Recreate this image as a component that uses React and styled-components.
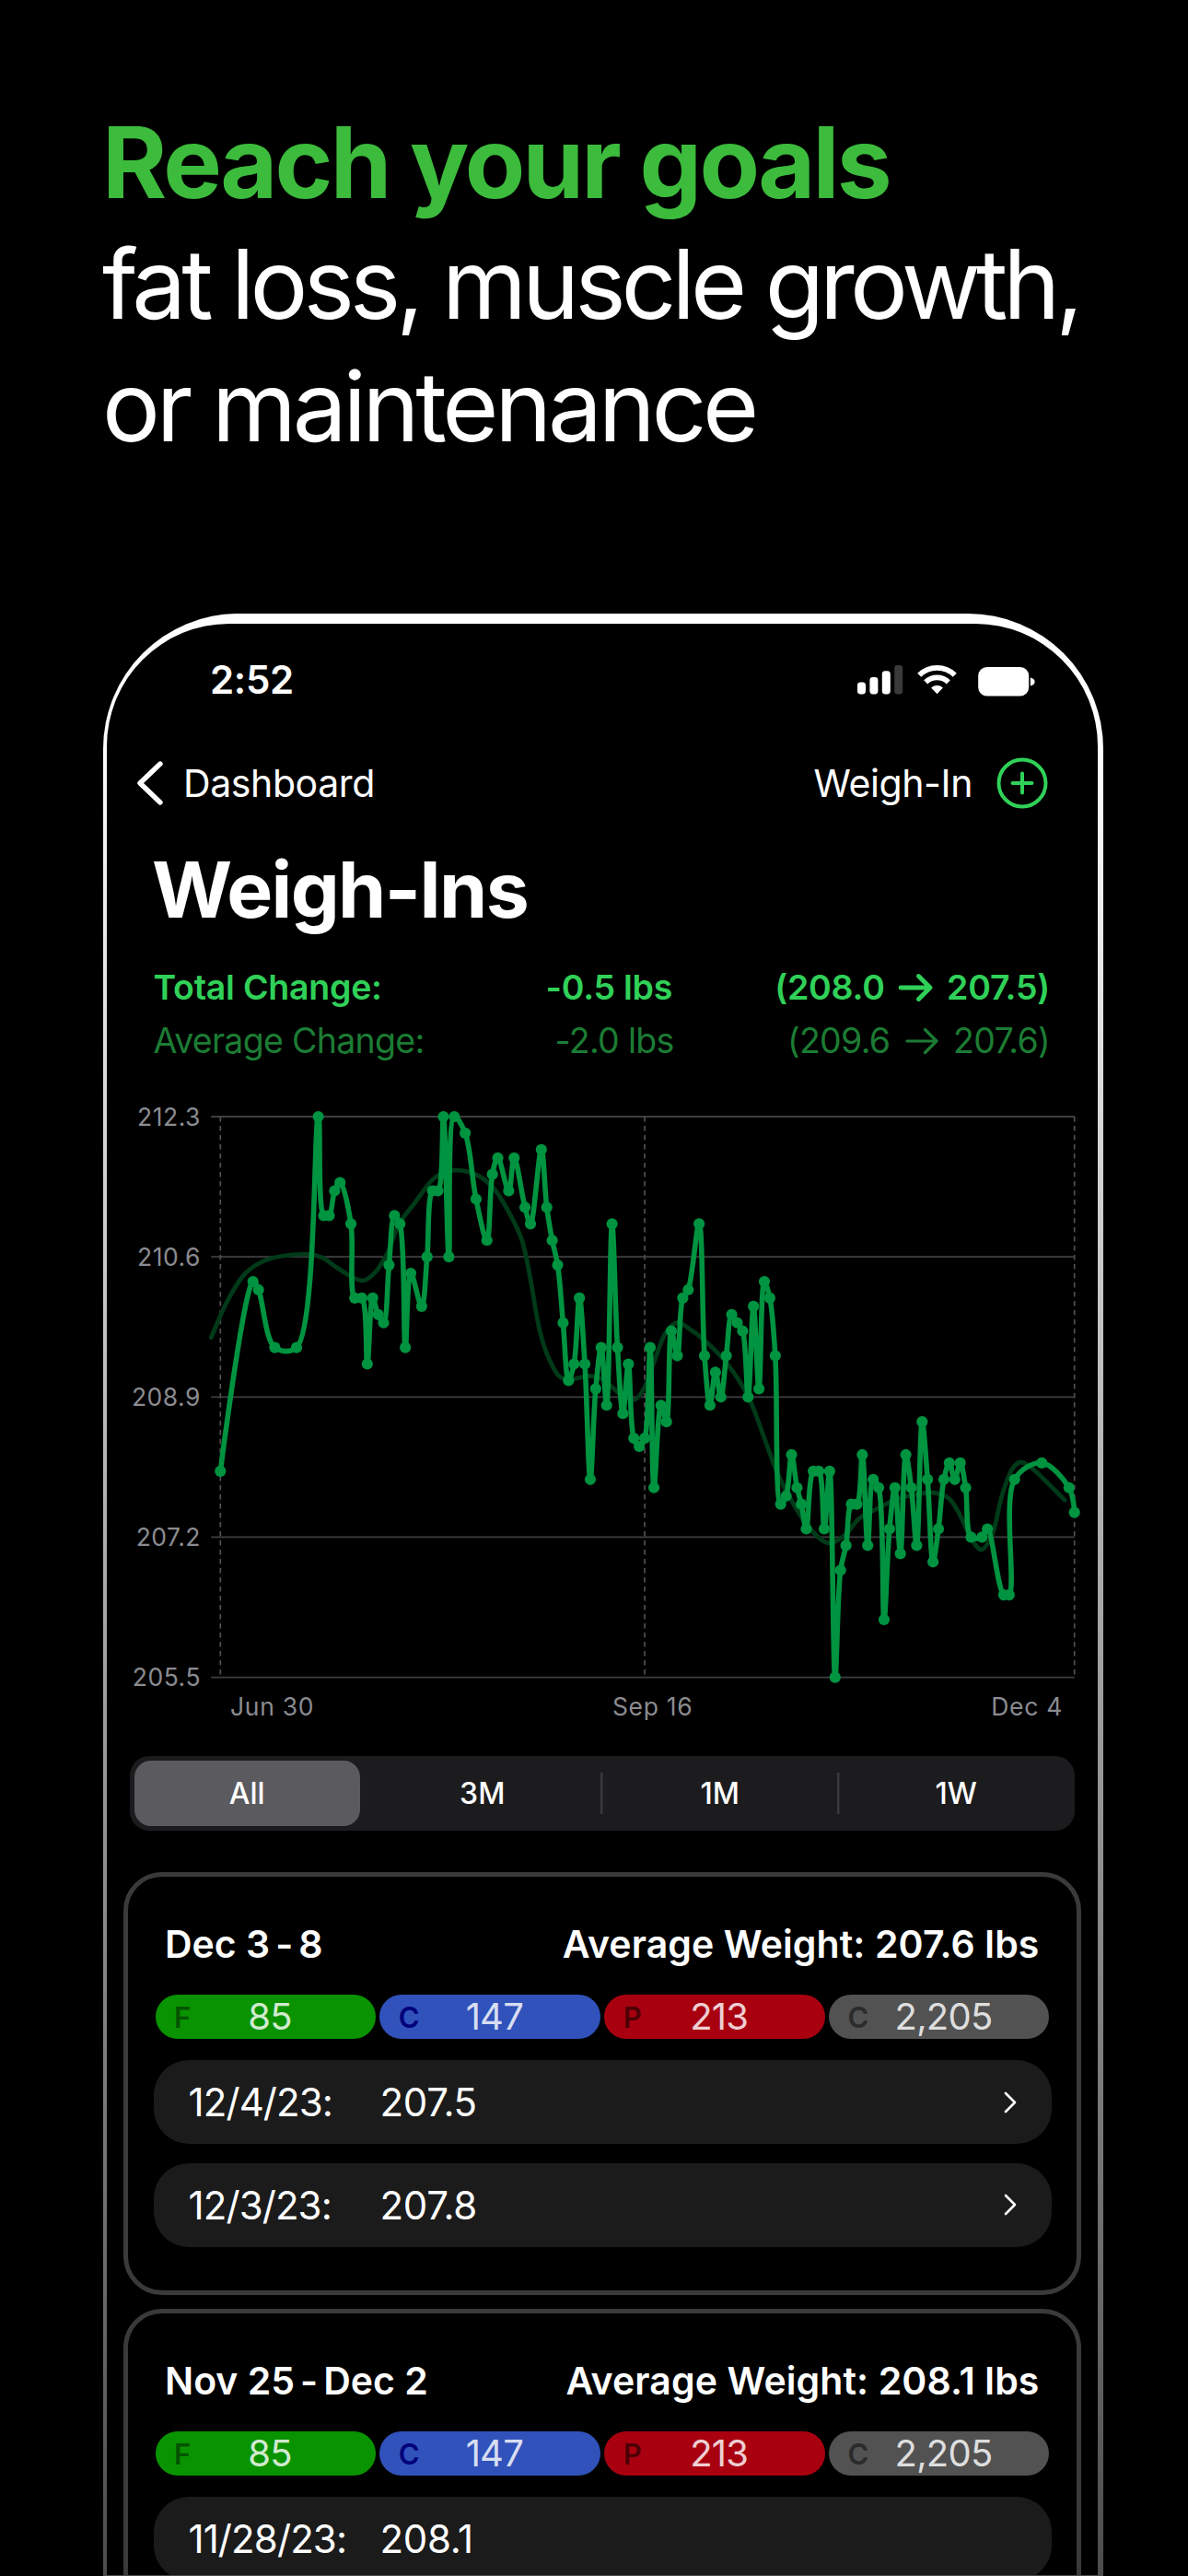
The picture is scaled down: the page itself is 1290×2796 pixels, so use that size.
import React from 'react';
import styled, { createGlobalStyle } from 'styled-components';

const GlobalStyle = createGlobalStyle`
  * {
    box-sizing: border-box;
  }

  body {
    margin: 0;
    background: #000;
    color: #fff;
    font-family: Inter, Roboto, "Liberation Sans", sans-serif;
  }
`;

const weights = [
  [0, 208.0], [6, 210.3], [7, 210.2], [10, 209.5], [14, 209.5], [18, 212.3],
  [19, 211.1], [20, 211.1], [21, 211.4], [22, 211.5], [24, 211.0], [24.7, 210.1],
  [26, 210.1], [27, 209.3], [28, 210.1], [29, 209.9], [30, 209.8], [31, 210.5],
  [32, 211.1], [33, 211.0], [34, 209.5], [35, 210.4], [37, 210.0], [38, 210.6],
  [39, 211.4], [40, 211.4], [41, 212.3], [42, 210.6], [43, 212.3], [45, 212.1],
  [47, 211.3], [49, 210.8], [50, 211.6], [51, 211.8], [53, 211.4], [54, 211.8],
  [56, 211.2], [57, 211.0], [59, 211.9], [60, 211.2], [61, 210.8], [62, 210.5],
  [63, 209.8], [64, 209.1], [65, 209.3], [66, 210.1], [67, 209.3], [68, 207.9],
  [69, 209.0], [70, 209.5], [71, 208.8], [72, 211.0], [73, 209.5], [74, 208.7],
  [75, 209.3], [76, 208.4], [77, 208.3], [78, 208.4], [79, 209.5], [79.7, 207.8],
  [81, 208.8], [82, 208.6], [82.9, 209.7], [84, 209.4], [85, 210.1], [86, 210.2],
  [88, 211.0], [89, 209.4], [90, 208.8], [91, 209.2], [92, 208.9], [93, 209.4],
  [94, 209.9], [95, 209.8], [96, 209.7], [97, 208.9], [98, 210.0], [99, 209.0],
  [100, 210.3], [101, 210.1], [102, 209.4], [103, 207.6], [104, 207.7], [105, 208.2],
  [106, 207.8], [106.8, 207.6], [107.7, 207.3], [109, 208.0], [110, 208.0], [111, 207.3],
  [112, 208.0], [113, 205.5], [114, 206.8], [115, 207.1], [116, 207.6], [117, 207.6],
  [118, 208.2], [119, 207.1], [120, 207.9], [121, 207.8], [122, 206.2], [123, 207.3],
  [124, 207.8], [125, 207.0], [126, 208.2], [127, 207.8], [128, 207.1], [129, 208.6],
  [130, 207.9], [131, 206.9], [132, 207.3], [133, 207.9], [134, 208.1], [135, 207.9],
  [136, 208.1], [137, 207.8], [138, 207.2], [140, 207.2], [141, 207.3], [144, 206.5],
  [145, 206.5], [146, 207.9], [151, 208.1], [156, 207.8], [157, 207.5],
];

const averages = [
  [-1.7, 209.62], [1.5, 210.09], [4.6, 210.4], [8, 210.55], [11.4, 210.61], [15.9, 210.63],
  [18.7, 210.59], [21.6, 210.46], [26.1, 210.31], [28.3, 210.4], [30.6, 210.63], [32.8, 210.99],
  [35.7, 211.25], [39.6, 211.57], [43, 211.65], [47.2, 211.59], [50.1, 211.44], [53.2, 211.12],
  [55.4, 210.81], [56.8, 210.4], [58.8, 209.68], [60.5, 209.35], [62.5, 209.14], [65, 209.12],
  [67.8, 209.155], [70.1, 209.12], [73.5, 208.94], [76.2, 208.87], [78, 209.02], [79.7, 209.32],
  [81.9, 209.68], [83.9, 209.8], [87, 209.69], [90.1, 209.52], [93.2, 209.3], [97, 208.91],
  [100, 208.4], [102, 208.04], [104, 207.76], [108.2, 207.32], [111.7, 207.13], [114.7, 207.22],
  [117.5, 207.43], [120.9, 207.55], [124.3, 207.66], [128.2, 207.72], [131, 207.74], [133.9, 207.67],
  [136.1, 207.45], [138.1, 207.17], [139.9, 207.05], [141.8, 207.22], [143.7, 207.71], [145.7, 208.04],
  [147.1, 208.11], [149.1, 208.04], [151.4, 207.9], [155.2, 207.65],
];

const ticks = [212.3, 210.6, 208.9, 207.2, 205.5];
const dayMarks = [0, 78, 157];

const toX = (day) => 12.3 + day * 5.907;
const toY = (lbs) => 10 + (212.3 - lbs) * 89.5;

// centripetal catmull-rom, converted to bezier segments
function curve(data) {
  const pts = data.map(([d, v]) => [toX(d), toY(v)]);
  let path = `M${pts[0][0]},${pts[0][1]}`;
  for (let i = 0; i < pts.length - 1; i++) {
    const p0 = pts[i - 1] || pts[i];
    const p1 = pts[i];
    const p2 = pts[i + 1];
    const p3 = pts[i + 2] || p2;
    const d1 = Math.hypot(p1[0] - p0[0], p1[1] - p0[1]);
    const d2 = Math.hypot(p2[0] - p1[0], p2[1] - p1[1]);
    const d3 = Math.hypot(p3[0] - p2[0], p3[1] - p2[1]);
    const [s1, s2, s3] = [d1, d2, d3].map(Math.sqrt);
    const c1 = [0, 1].map((k) =>
      d1 ? (p1[k] * (2 * d1 + 3 * s1 * s2 + d2) - p0[k] * d2 + p2[k] * d1) / (3 * s1 * (s1 + s2)) : p1[k]
    );
    const c2 = [0, 1].map((k) =>
      d3 ? (p2[k] * (2 * d3 + 3 * s3 * s2 + d2) + p1[k] * d3 - p3[k] * d2) / (3 * s3 * (s3 + s2)) : p2[k]
    );
    path += `C${c1.join()} ${c2.join()} ${p2.join()}`;
  }
  return path;
}

const macros = [
  { letter: 'F', value: '85', bg: '#099300', ink: '#045300' },
  { letter: 'C', value: '147', bg: '#3152bb', ink: '#00007a' },
  { letter: 'P', value: '213', bg: '#a90010', ink: '#4d0004' },
  { letter: 'C', value: '2,205', bg: '#525252', ink: '#2b2b2b' },
];

const weeks = [
  {
    range: ['Dec 3', '8'],
    average: '207.6',
    entries: [
      { date: '12/4/23:', weight: '207.5' },
      { date: '12/3/23:', weight: '207.8' },
    ],
  },
  {
    range: ['Nov 25', 'Dec 2'],
    average: '208.1',
    entries: [{ date: '11/28/23:', weight: '208.1', plain: true }],
  },
];

const App = () => {
  return (
    <Page>
      <GlobalStyle />
      <Headline>
        <Strong>Reach your goals</Strong>
        <Line $spacing="-5px">fat loss, muscle growth,</Line>
        <Line $spacing="-4.3px">or maintenance</Line>
      </Headline>
      <Phone>
        <Screen>
          <StatusBar>
            <Time>2:52</Time>
            <StatusIcons />
          </StatusBar>
          <NavBar>
            <Back>
              <svg width="32" height="52" viewBox="0 0 32 52" fill="none">
                <path d="M28 5 L6 26 L28 47" stroke="#fff" strokeWidth="5.4" strokeLinecap="round" strokeLinejoin="round" />
              </svg>
              <BackLabel>Dashboard</BackLabel>
            </Back>
            <Add>
              Weigh-In
              <svg width="56" height="56" viewBox="0 0 56 56" fill="none" stroke="#30d158" strokeWidth="4" strokeLinecap="round">
                <circle cx="28" cy="28" r="25.5" />
                <path d="M28 17.5V38.5M17.5 28H38.5" />
              </svg>
            </Add>
          </NavBar>
          <Title>Weigh-Ins</Title>
          <Change $bold>
            <span>Total Change:</span>
            <span>-0.5 lbs</span>
            <Range>(208.0 <Arrow bold /> 207.5)</Range>
          </Change>
          <Change>
            <span>Average Change:</span>
            <span>-2.0 lbs</span>
            <Range>(209.6 <Arrow /> 207.6)</Range>
          </Change>
          <Chart />
          <Segments>
            <Segment $active>All</Segment>
            <Segment>3M</Segment>
            <Segment $divided>1M</Segment>
            <Segment $divided>1W</Segment>
          </Segments>
          <Weeks>
            {weeks.map((week) => (
              <Week key={week.average} {...week} />
            ))}
          </Weeks>
        </Screen>
      </Phone>
    </Page>
  );
};

export default App;

const StatusIcons = () => (
  <svg width="194" height="40" viewBox="0 0 194 40" fill="#fff">
    <rect x="0" y="22.6" width="9" height="12.8" rx="3.4" />
    <rect x="13.4" y="17" width="9" height="18.4" rx="3.4" />
    <rect x="26.8" y="10.3" width="9" height="25.1" rx="3.4" />
    <rect x="40.2" y="4" width="9" height="31.4" rx="3.4" fill="#3a3a3a" />
    <g fill="none" stroke="#fff" strokeWidth="5.8">
      <path d="M67.2 14.8a27.5 27.5 0 0 1 38.6 0" />
      <path d="M74.2 22.4a17.6 17.6 0 0 1 24.6 0" />
    </g>
    <path d="M80.1 28.4a9.6 9.6 0 0 1 12.8 0L86.5 35.2z" />
    <rect x="131.2" y="6" width="55" height="31.6" rx="9.5" />
    <path d="M187.8 17.4c3.4 0.8 4.8 2.6 4.8 4.5s-1.4 3.7-4.8 4.5z" />
  </svg>
);

const Arrow = ({ bold }) => (
  <ArrowIcon viewBox="0 0 38 32" fill="none" stroke="currentColor" strokeWidth={bold ? 4.8 : 3.2} strokeLinecap="round" strokeLinejoin="round">
    <path d="M3 16H35M22.5 3.5L35 16L22.5 28.5" />
  </ArrowIcon>
);

const Chart = () => (
  <ChartRow>
    <YAxis>
      {ticks.map((t) => (
        <Tick key={t}>{t.toFixed(1)}</Tick>
      ))}
    </YAxis>
    <PlotColumn>
      <svg width="947" height="630" viewBox="0 0 947 630" fill="none">
        {ticks.map((t) => (
          <path key={t} d={`M2.3 ${toY(t)}H939.7`} stroke="#3f3f41" strokeWidth="1.8" />
        ))}
        {dayMarks.map((d) => (
          <path key={d} d={`M${toX(d)} 10V618.6`} stroke="#505052" strokeWidth="1.7" strokeDasharray="5.5 4.5" />
        ))}
        <path d={curve(averages)} stroke="#003a19" strokeWidth="4.8" strokeLinecap="round" />
        <path d={curve(weights)} stroke="#009340" strokeWidth="5.6" strokeLinejoin="round" />
        {weights.map(([d, v]) => (
          <circle key={d} cx={toX(d)} cy={toY(v)} r="6.1" fill="#009340" />
        ))}
      </svg>
      <XAxis>
        <span>Jun 30</span>
        <span>Sep 16</span>
        <span>Dec 4</span>
      </XAxis>
    </PlotColumn>
  </ChartRow>
);

const Week = ({ range, average, entries }) => (
  <Card>
    <CardHeader>
      <Dates>
        {range[0]}
        <Dash>-</Dash>
        {range[1]}
      </Dates>
      <Average>Average Weight: {average} lbs</Average>
    </CardHeader>
    <Macros>
      {macros.map((m) => (
        <Macro key={m.value} $bg={m.bg}>
          <Letter $ink={m.ink}>{m.letter}</Letter>
          <Amount>{m.value}</Amount>
        </Macro>
      ))}
    </Macros>
    {entries.map((entry) => (
      <Entry key={entry.date}>
        <EntryDate>{entry.date}</EntryDate>
        <EntryWeight>{entry.weight}</EntryWeight>
        {!entry.plain && (
          <svg width="18" height="28" viewBox="0 0 18 28" fill="none">
            <path d="M4 4L14 14L4 24" stroke="#fff" strokeWidth="2.6" strokeLinecap="round" strokeLinejoin="round" />
          </svg>
        )}
      </Entry>
    ))}
  </Card>
);

const Page = styled.main`
  width: 1290px;
  height: 2796px;
  overflow: hidden;
  background: #000;
`;

const Headline = styled.header`
  height: 666px;
  padding: 110px 0 0 111px;
  line-height: 132.4px;
  white-space: nowrap;
`;

const Strong = styled.div`
  color: #3cbb3c;
  font-size: 107px;
  font-weight: 700;
  letter-spacing: -2.8px;
`;

const Line = styled.div`
  font-size: 105px;
  font-weight: 400;
  letter-spacing: ${(p) => p.$spacing};
`;

const Phone = styled.section`
  width: 1086px;
  height: 2130px;
  margin-left: 112px;
  padding: 11px 6px 0 4px;
  border-radius: 147px 147px 0 0;
  background: linear-gradient(#fff 0, #fff 120px, #ddd 480px, #999 1230px, #666 1850px, #4c4c4c 2130px);
`;

const Screen = styled.div`
  height: 2118px;
  padding: 0 18px;
  border-radius: 133px 133px 0 0;
  background: #000;
  overflow: hidden;
`;

const StatusBar = styled.div`
  display: flex;
  justify-content: space-between;
  height: 125px;
  padding: 41px 49px 0 94px;
`;

const Time = styled.div`
  font-size: 42px;
  line-height: 40px;
  font-weight: 600;
  letter-spacing: -0.3px;
`;

const NavBar = styled.nav`
  display: flex;
  justify-content: space-between;
  align-items: center;
  height: 96px;
  padding: 0 36px 0 12px;
  font-size: 41px;
  letter-spacing: -0.4px;
`;

const Back = styled.div`
  display: flex;
  align-items: center;
  gap: 21px;
`;

const BackLabel = styled.span`
  white-space: nowrap;
`;

const Add = styled.div`
  display: flex;
  align-items: center;
  gap: 26px;
`;

const Title = styled.h1`
  margin: 0 0 0 31px;
  height: 144px;
  padding-top: 17px;
  font-size: 84px;
  line-height: 102px;
  font-weight: 700;
  letter-spacing: -1.7px;
`;

const Change = styled.div`
  display: grid;
  grid-template-columns: ${(p) => (p.$bold ? '426px 200px 1fr' : '436px 200px 1fr')};
  align-items: center;
  height: 58px;
  padding: 0 34px 0 32.5px;
  font-size: 37.5px;
  letter-spacing: ${(p) => (p.$bold ? '-0.25px' : '-0.7px')};
  white-space: nowrap;
  font-weight: ${(p) => (p.$bold ? 600 : 400)};
  color: ${(p) => (p.$bold ? '#30d158' : '#1c7c34')};
`;

const Range = styled.span`
  text-align: right;
`;

const ArrowIcon = styled.svg`
  width: 38px;
  height: 32px;
  margin: 0 5.5px;
  vertical-align: -3px;
`;

const ChartRow = styled.div`
  display: flex;
  height: 704px;
  margin-top: 44px;
`;

const YAxis = styled.div`
  display: flex;
  flex-direction: column;
  flex-shrink: 0;
  justify-content: space-between;
  width: 84px;
  height: 640px;
  margin: -6px 9px 0 0;
  color: #8b8b90;
  font-size: 26.5px;
  letter-spacing: 0.5px;
  text-align: right;
`;

const Tick = styled.span`
  line-height: 32px;
`;

const PlotColumn = styled.div`
  width: 947px;
  flex-shrink: 0;
`;

const XAxis = styled.div`
  display: flex;
  justify-content: space-between;
  padding: 0 20px 0 23px;
  color: #8b8b90;
  font-size: 26.5px;
  line-height: 32px;
  letter-spacing: 0.7px;
`;

const Segments = styled.div`
  display: flex;
  width: 1026px;
  height: 81px;
  margin-left: 7px;
  padding: 5px 0;
  border-radius: 21px;
  background: #1c1c1e;
  font-size: 32px;
  font-weight: 500;
`;

const Segment = styled.div`
  display: flex;
  align-items: center;
  justify-content: center;
  flex-shrink: 0;
  width: ${(p) => (p.$active ? 244.5 : 256.5)}px;
  margin-left: ${(p) => (p.$active ? 5 : 0)}px;
  margin-right: ${(p) => (p.$active ? 5 : 0)}px;
  padding-left: ${(p) => (p.$divided ? 3 : 0)}px;
  border-radius: ${(p) => (p.$active ? '18px' : 0)};
  background: ${(p) => (p.$active ? '#5b5a5f' : 'none')};

  ${(p) => p.$divided && `
    background: linear-gradient(#39393c, #39393c) left center / 2.5px 45px no-repeat;
  `}
`;

const Weeks = styled.div`
  display: flex;
  flex-direction: column;
  gap: 15px;
  margin-top: 45px;
`;

const Card = styled.article`
  width: 1040px;
  padding: 47px 27.5px 27px;
  border: 5px solid #3a3a3c;
  border-radius: 42px;
`;

const CardHeader = styled.div`
  display: flex;
  justify-content: space-between;
  padding: 0 13px 0 12.5px;
  height: 81px;
  font-size: 41px;
  line-height: 52px;
  font-weight: 600;
`;

const Dates = styled.div`
  display: flex;
`;

const Dash = styled.span`
  margin: 0 6px;
`;

const Average = styled.div`
  letter-spacing: 0.1px;
`;

const Macros = styled.div`
  display: flex;
  justify-content: space-between;
  padding: 0 2px;
  margin-bottom: 23px;
`;

const Macro = styled.div`
  display: flex;
  align-items: center;
  width: 239.5px;
  height: 48px;
  padding-left: 20.5px;
  border-radius: 24px;
  background: ${(p) => p.$bg};
`;

const Letter = styled.span`
  width: 25px;
  color: ${(p) => p.$ink};
  font-size: 31px;
  font-weight: 600;
`;

const Amount = styled.span`
  flex: 1;
  padding-right: 36px;
  text-align: center;
  font-size: 40px;
  line-height: 48px;
  letter-spacing: -0.8px;
  color: rgba(255, 255, 255, 0.82);
`;

const Entry = styled.div`
  display: flex;
  align-items: center;
  height: 91px;
  padding: 0 36px 0 38px;
  margin-bottom: 20.5px;
  border-radius: 38px;
  background: #1b1b1b;
  font-size: 42px;

  svg {
    margin-left: auto;
  }
`;

const EntryDate = styled.span`
  width: 208px;
  letter-spacing: -0.9px;
`;

const EntryWeight = styled.span`
  letter-spacing: -0.3px;
`;
